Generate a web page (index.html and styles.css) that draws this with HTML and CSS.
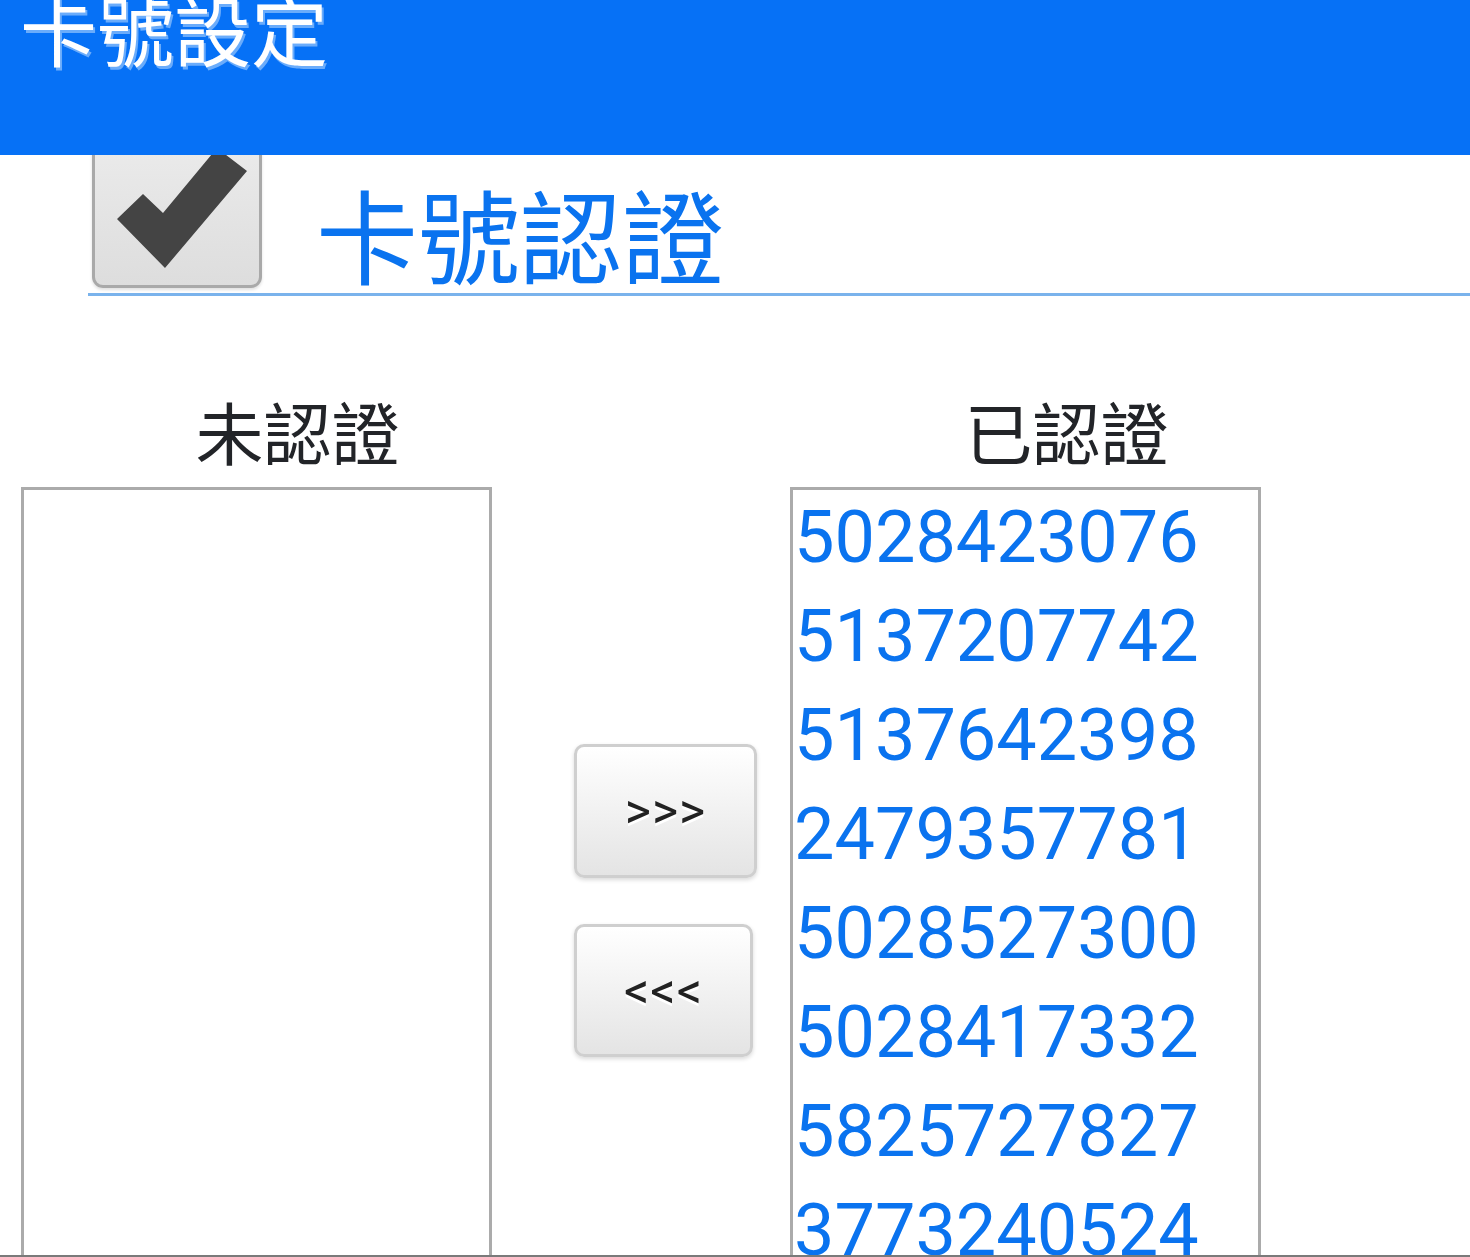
FILE: index.html
```html
<!DOCTYPE html>
<html>
  <head>
    <meta charset="UTF-8">
    <meta name="viewport" content="width=device-width, initial-scale=1.0">
    <title>卡號設定</title>
    <link rel="stylesheet" href="styles.css">
  </head>
  <body>
    <div class="screen">
      <!-- Top bar -->
      <header class="app-bar">
        <h1>卡號設定</h1>
      </header>

      <!-- Section toggle -->
      <div class="section-row">
        <div class="check-box">
          <svg viewBox="0 0 164 177" width="164" height="177">
            <polygon points="22,108 48,83 68,102 122,37 152,60 70,157" fill="#444"></polygon>
          </svg>
        </div>
        <h2 class="section-title">卡號認證</h2>
      </div>

      <!-- Transfer lists -->
      <div class="transfer">
        <div class="list-col">
          <div class="list-label">未認證</div>
          <ul class="card-list" id="pending-list"></ul>
        </div>
        <div class="btn-col">
          <button class="move-btn move-right">&gt;&gt;&gt;</button>
          <button class="move-btn move-left">&lt;&lt;&lt;</button>
        </div>
        <div class="list-col">
          <div class="list-label">已認證</div>
          <ul class="card-list" id="verified-list">
            <li>5028423076</li>
            <li>5137207742</li>
            <li>5137642398</li>
            <li>2479357781</li>
            <li>5028527300</li>
            <li>5028417332</li>
            <li>5825727827</li>
            <li>3773240524</li>
          </ul>
        </div>
      </div>
    </div>
  </body>
</html>
```

FILE: styles.css
```css
* {
  box-sizing: border-box;
}
body {
  margin: 0;
  padding: 0;
  background: #fff;
  font-family: "Noto Sans CJK TC", "Noto Sans", sans-serif;
}
/* Whole phone screen */
.screen {
  width: 1470px;
  height: 1257px;
  overflow: hidden;
  border-bottom: 2px solid #7a7a7a;
}
/* Header bar */
.app-bar {
  position: relative;
  z-index: 2;
  height: 155px;
  background: #0671f6;
  overflow: hidden;
}
.app-bar h1 {
  margin: -11px 0 0 0;
  padding-left: 20px;
  font-size: 77px;
  font-weight: 400;
  line-height: 1;
  color: #fff;
  text-shadow: 2px 3px 0 rgba(190, 220, 255, 0.55);
}
/* Checkbox + section title */
.section-row {
  display: flex;
  align-items: flex-end;
  margin: -47px 0 0 88px;
  padding-bottom: 5px;
  border-bottom: 3px solid #7ab3ec;
}
.check-box {
  width: 170px;
  height: 180px;
  margin-left: 4px;
  border: 3px solid #a9a9a9;
  border-radius: 0 0 11px 11px;
  background: linear-gradient(#eeeeee, #dddddd);
  box-shadow: 0 2px 3px rgba(0, 0, 0, 0.12);
}
.check-box svg {
  display: block;
}
.section-title {
  margin: 0 0 4px 54px;
  font-size: 102px;
  font-weight: 400;
  line-height: 1;
  color: #0a73ef;
}
/* Two lists with move buttons */
.transfer {
  display: flex;
  padding-left: 21px;
}
.list-col {
  width: 471px;
}
.list-label {
  margin-top: 101px;
  padding-left: 82px;
  text-align: center;
  font-size: 68px;
  line-height: 1;
  color: #222428;
}
ul.card-list {
  list-style: none;
  margin: 22px 0 0 0;
  padding: 0 0 0 1px;
  height: 900px;
  border: 3px solid #ababab;
  overflow: hidden;
}
ul.card-list li {
  margin-top: -2px;
  margin-bottom: 2px;
  font-family: Roboto, "Noto Sans", sans-serif;
  font-size: 72px;
  line-height: 99px;
  color: #0a73ef;
}
.btn-col {
  width: 298px;
  display: flex;
  flex-direction: column;
  align-items: flex-start;
  padding-left: 82px;
}
.move-btn {
  border: 3px solid #cfcfcf;
  border-radius: 10px;
  background: linear-gradient(#ffffff, #e4e4e4);
  box-shadow: 0 2px 4px rgba(0, 0, 0, 0.15);
  font-family: Roboto, "Noto Sans", sans-serif;
  font-size: 50px;
  color: #222;
  text-shadow: 0 3px 0 #fff;
  letter-spacing: 1px;
  padding: 0;
}
.move-right {
  width: 183px;
  height: 134px;
  margin-top: 448px;
}
.move-left {
  width: 179px;
  height: 133px;
  margin-top: 46px;
}
```
